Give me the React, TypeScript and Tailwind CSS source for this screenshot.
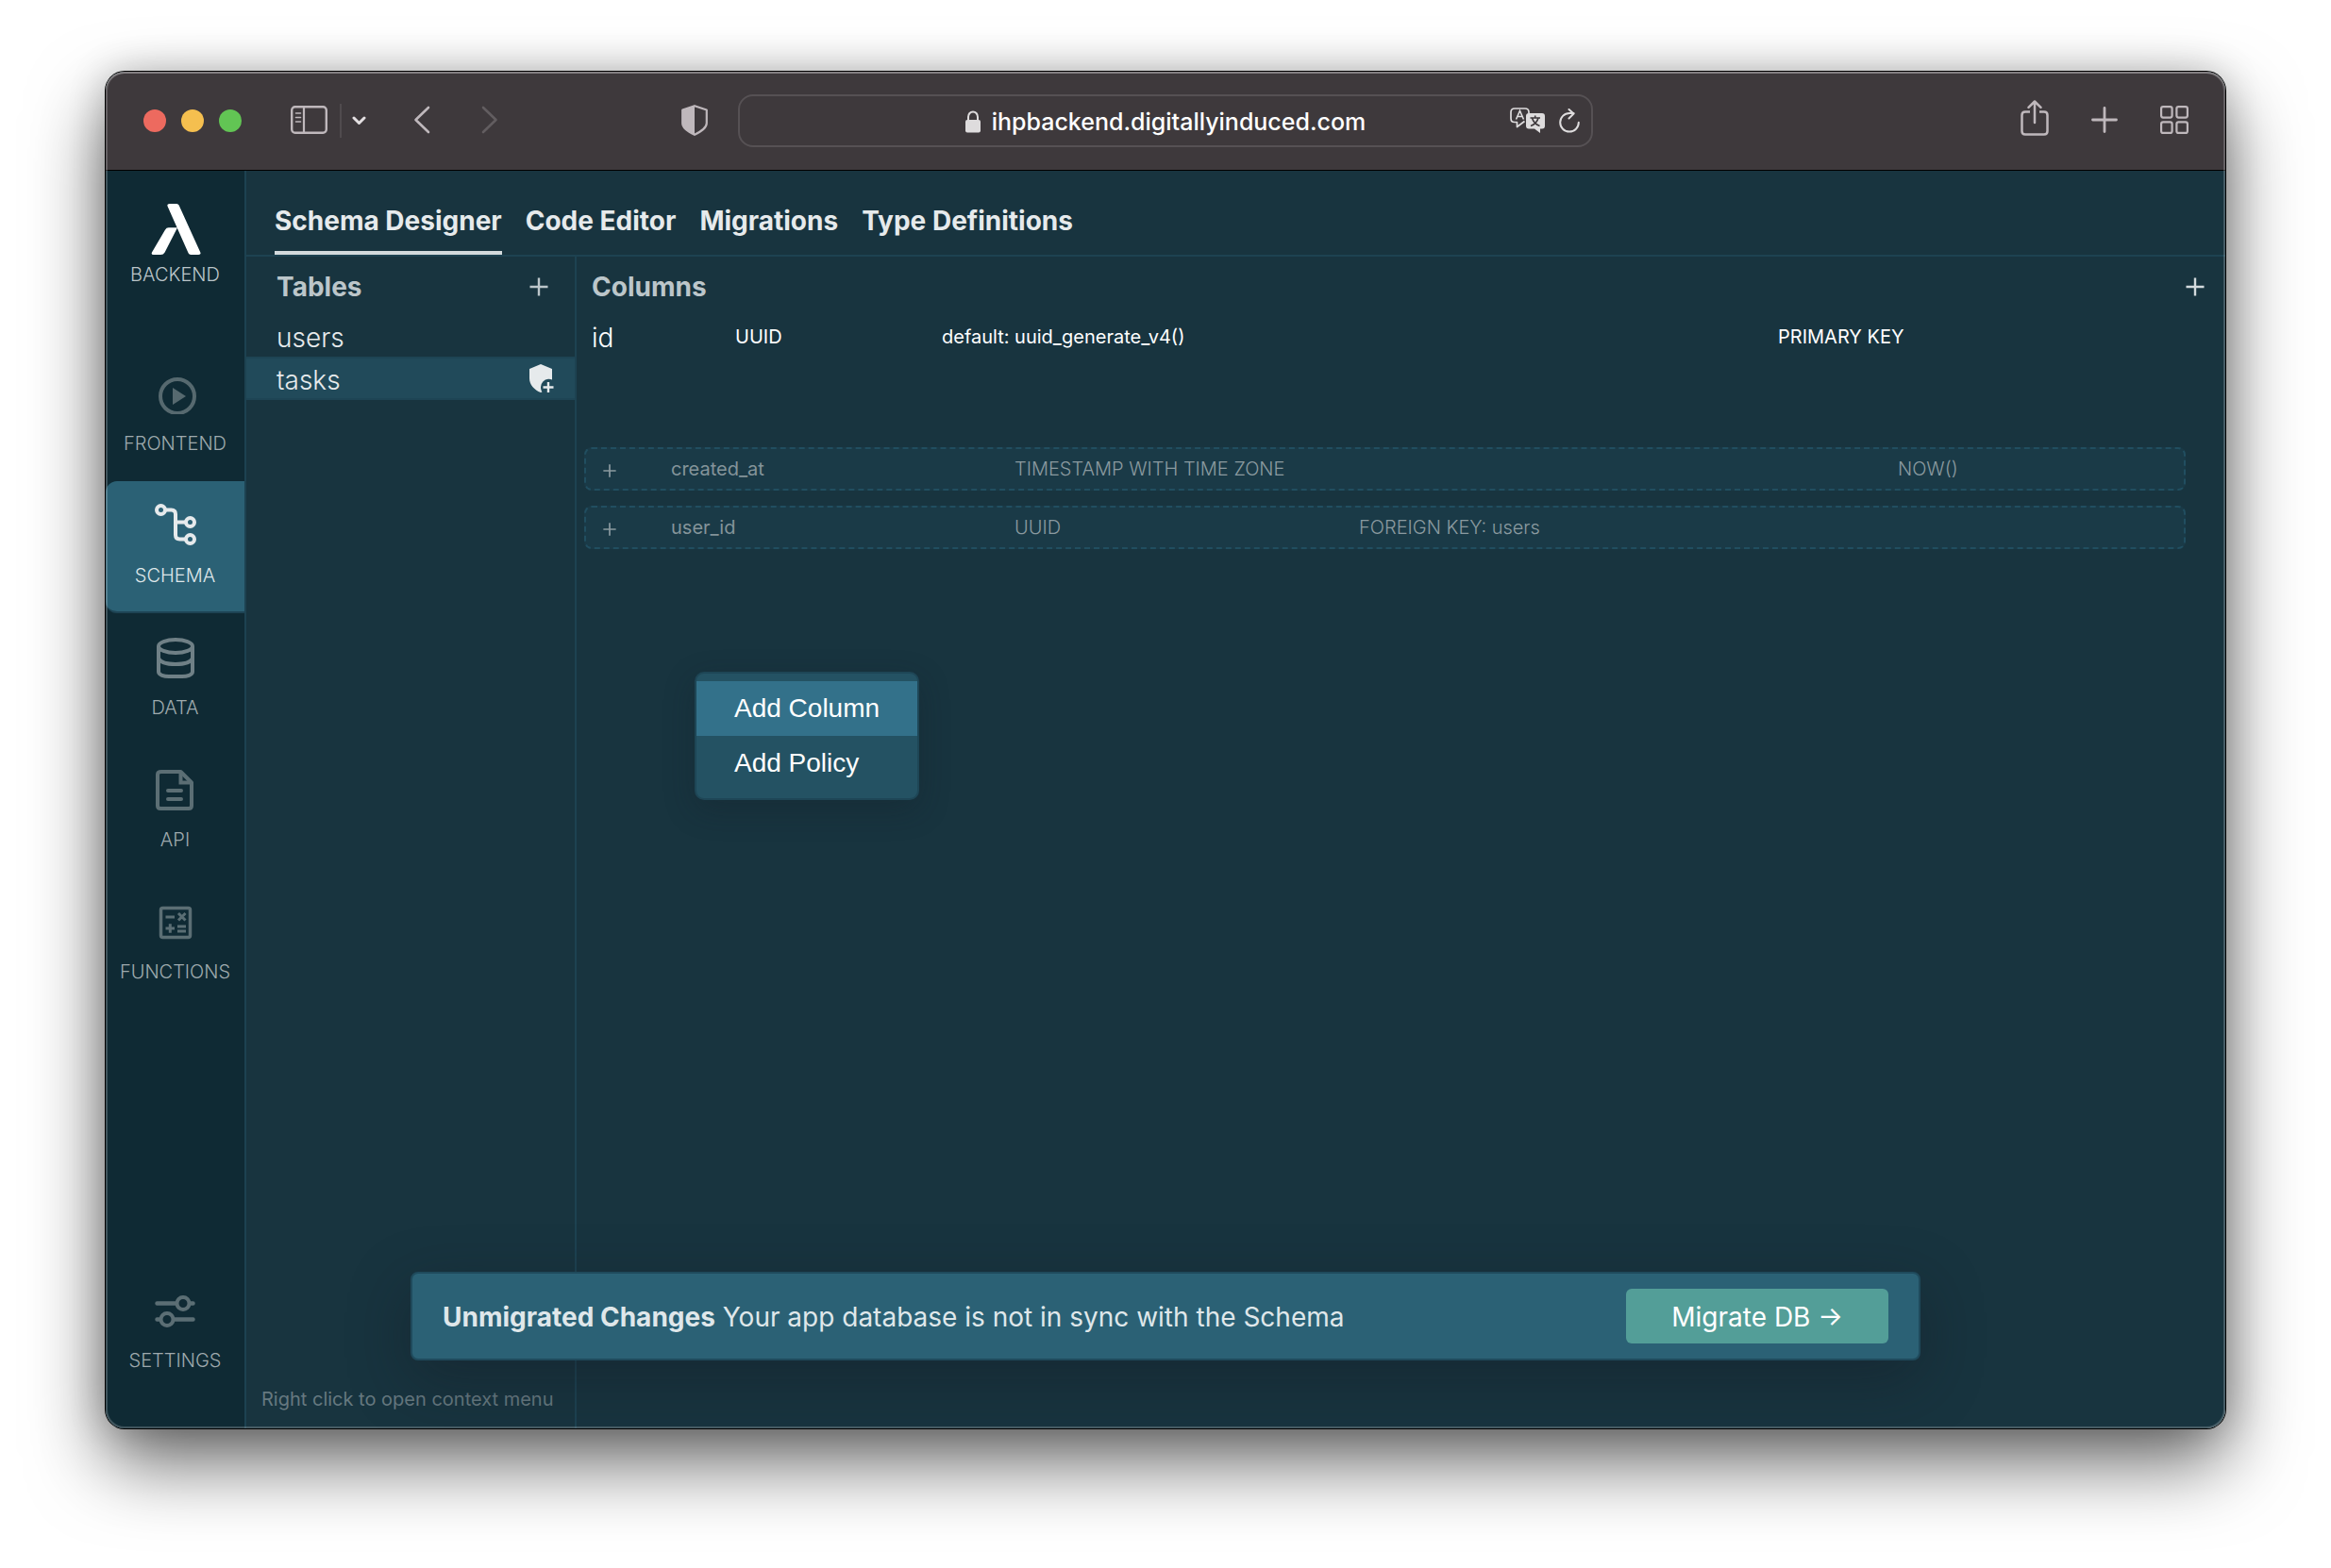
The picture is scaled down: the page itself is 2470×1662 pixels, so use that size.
import React from "react";

const tabs = ["Schema Designer", "Code Editor", "Migrations", "Type Definitions"];
const tables = ["users", "tasks"];

function LambdaLogo() {
  return (
    <svg className="h-[54px] w-[54px]" viewBox="0 0 54 54" fill="#ffffff" aria-hidden="true">
      <path d="M20.500 0h7.600q1.800 0 2.500 1.600l22.600 49.600q1.300 2.800-1.800 2.800h-8.200q-1.800 0-2.600-1.700L18.600 2.800Q17.600 0 20.500 0Z" />
      <path d="M19.700 25.300h9.300L15.600 51.500q-1.400 2.500-4.300 2.500H3.700Q.7 54 2.100 51.300L15.900 27.700q1.400-2.400 3.800-2.400Z" />
    </svg>
  );
}

function PlayIcon() {
  return (
    <svg className="h-11 w-11" viewBox="0 0 44 44" aria-hidden="true">
      <clipPath id="play-clip">
        <rect width="44" height="43" />
      </clipPath>
      <g clipPath="url(#play-clip)">
        <circle cx="24" cy="24" r="18" fill="none" stroke="currentColor" strokeWidth="4" />
        <path d="M19 15v18l14-9Z" fill="currentColor" />
      </g>
    </svg>
  );
}

function SchemaIcon() {
  return (
    <svg className="h-11 w-11 overflow-visible" viewBox="0 0 44 44" fill="none" stroke="currentColor" strokeWidth="4" aria-hidden="true">
      <circle cx="6.500" cy="4.500" r="4.500" />
      <circle cx="37.500" cy="17.500" r="4.500" />
      <circle cx="37.500" cy="35.500" r="4.500" />
      <path d="M12 4.500h5.500q4.500 0 4.500 4.500v22q0 4.500 4.500 4.500H32M22 17.500h10" />
    </svg>
  );
}

function DataIcon() {
  return (
    <svg className="h-11 w-11" viewBox="0 0 44 44" fill="none" stroke="currentColor" strokeWidth="4" aria-hidden="true">
      <ellipse cx="22" cy="9" rx="18" ry="7" />
      <path d="M4 9v27c0 3.500 6 5 11 5h14c5 0 11-1.500 11-5V9" />
      <path d="M4 22c2 4 9 6 18 6s16-2 18-6" />
    </svg>
  );
}

function ApiIcon() {
  return (
    <svg className="h-11 w-11" viewBox="0 0 44 44" fill="none" stroke="currentColor" strokeWidth="4" aria-hidden="true">
      <path d="M7 2h20.500L39 13.500V38q0 3-3 3H6q-3 0-3-3V5q0-3 4-3Z" strokeLinejoin="round" />
      <path d="M27.500 2v11.500H39" />
      <path d="M14 22h14M14 31h14" strokeLinecap="round" />
    </svg>
  );
}

function FunctionsIcon() {
  return (
    <svg className="h-11 w-11" viewBox="0 0 44 44" fill="none" stroke="currentColor" strokeWidth="3" aria-hidden="true">
      <rect x="6.500" y="6.500" width="31" height="31" rx="2" strokeWidth="3.500" />
      <path d="M11.500 16h9.500M25 12l7.500 7.500M32.500 12L25 19.500M11.500 28H21M16.300 23.300v9.500M24 26h9M24 31h9" />
    </svg>
  );
}

function SettingsIcon() {
  return (
    <svg className="h-11 w-11" viewBox="0 0 44 44" fill="none" stroke="currentColor" strokeWidth="4.500" strokeLinecap="round" aria-hidden="true">
      <circle cx="30" cy="13.500" r="6.500" strokeWidth="4" />
      <circle cx="13" cy="30.500" r="6.500" strokeWidth="4" />
      <path d="M2.500 13.500H22M38 13.500h2.500M2.500 30.500H5M21 30.500h19.500" />
    </svg>
  );
}

function PlusIcon({ className }: { className: string }) {
  return (
    <svg className={className} viewBox="0 0 20 20" fill="none" stroke="currentColor" strokeWidth="2.400" aria-hidden="true">
      <path d="M10 0.500v19M0.500 10h19" />
    </svg>
  );
}

function ShieldPlusIcon() {
  return (
    <svg className="h-[30px] w-[26px]" viewBox="0 0 26 30" aria-hidden="true">
      <path
        fill="currentColor"
        d="M12 0 24 5v11.400a9 9 0 0 0-4-.6 8.600 8.600 0 0 0-8 8.500c0 2 .5 3.700 1.400 5.200l-1.400.5C5 27.500 0 21.500 0 15V5Z"
      />
      <path d="M20 19v11M14.500 24.500h11" fill="none" stroke="currentColor" strokeWidth="2.400" />
    </svg>
  );
}

const sections = [
  { label: "FRONTEND", icon: <PlayIcon />, tone: "text-[#56696f]" },
  { label: "SCHEMA", icon: <SchemaIcon />, tone: "text-[#e6eaec]", active: true },
  { label: "DATA", icon: <DataIcon />, tone: "text-[#6f8086]" },
  { label: "API", icon: <ApiIcon />, tone: "text-[#5b6e74]" },
  { label: "FUNCTIONS", icon: <FunctionsIcon />, tone: "text-[#5b6e74]" },
];

function NavItem({ label, icon, tone, active }: { label: string; icon: React.ReactNode; tone: string; active?: boolean }) {
  return (
    <a
      href="#"
      aria-current={active ? "page" : undefined}
      className={
        active
          ? "flex h-[140px] flex-col items-center gap-4 rounded-l-xl border-b-2 border-[#1e4454] bg-[#2b6175] pt-[26px] text-[#dfe7ea]"
          : "flex h-[140px] flex-col items-center gap-4 pt-[26px] text-[#9faaae]"
      }
    >
      <span className={tone}>{icon}</span>
      <span className="text-xl leading-7 font-light">{label}</span>
    </a>
  );
}

function TitleBar() {
  return (
    <header className="grid h-[105px] grid-cols-[1fr_906px_1fr] items-center border-b border-black bg-[#3e393c] text-[#bfb8bc]">
      <div className="flex items-center pl-10">
        <div className="flex gap-4">
          <button aria-label="Close" className="size-6 rounded-full bg-[#ed6a5f]" />
          <button aria-label="Minimize" className="size-6 rounded-full bg-[#f5bf4f]" />
          <button aria-label="Zoom" className="size-6 rounded-full bg-[#62c554]" />
        </div>
        <button aria-label="Sidebar" className="mb-0.5 ml-[52px]">
          <svg className="h-[30px] w-[39px]" viewBox="0 0 39 30" fill="none" stroke="currentColor" aria-hidden="true">
            <rect x="1.200" y="1.200" width="36.600" height="27.600" rx="3.500" strokeWidth="2.400" />
            <path d="M14 1v28" strokeWidth="2.200" />
            <path d="M5.500 8h5M5.500 12.500h5M5.500 17h5" strokeWidth="1.600" strokeLinecap="round" />
          </svg>
        </button>
        <span className="ml-[13px] h-9 w-0.5 bg-[#504b4e]" />
        <button aria-label="Tab groups" className="ml-[11px] text-[#e4e0e2]">
          <svg className="h-2.5 w-[15px]" viewBox="0 0 15 10" fill="none" stroke="currentColor" strokeWidth="3" strokeLinecap="round" strokeLinejoin="round" aria-hidden="true">
            <path d="m2 2 5.500 5.500L13 2" />
          </svg>
        </button>
        <button aria-label="Back" className="mb-0.5 ml-[50px]">
          <svg className="h-[30px] w-[18px]" viewBox="0 0 18 30" fill="none" stroke="currentColor" strokeWidth="2.600" strokeLinecap="round" strokeLinejoin="round" aria-hidden="true">
            <path d="M16 2 2.500 15 16 28" />
          </svg>
        </button>
        <button aria-label="Forward" className="mb-0.5 ml-[54px] text-[#625d60]">
          <svg className="h-[30px] w-[18px]" viewBox="0 0 18 30" fill="none" stroke="currentColor" strokeWidth="2.600" strokeLinecap="round" strokeLinejoin="round" aria-hidden="true">
            <path d="m2 2 13.500 13L2 28" />
          </svg>
        </button>
        <button aria-label="Privacy report" className="mr-8 mb-0.5 ml-auto">
          <svg className="h-[33px] w-7" viewBox="0 0 28 33" aria-hidden="true">
            <path d="M14 1.200 26.800 5.500v14c0 5-5.500 8.500-12.800 12.300C6.700 28 1.200 24.500 1.200 19.500v-14Z" fill="none" stroke="currentColor" strokeWidth="2.200" strokeLinejoin="round" />
            <path d="M14 1.200v30.600C6.700 28 1.200 24.500 1.200 19.500v-14Z" fill="currentColor" />
          </svg>
        </button>
      </div>

      <div className="grid h-14 grid-cols-[1fr_auto_1fr] items-center rounded-2xl border-2 border-[#565154] px-3 text-[#dedcdd]">
        <span />
        <label className="flex items-center gap-3 pt-0.5">
          <svg className="h-6 w-4" viewBox="0 0 16 24" aria-hidden="true">
            <rect y="10" width="16" height="13.500" rx="2" fill="currentColor" />
            <path d="M3 11V7a5 5.600 0 0 1 10 0v4" fill="none" stroke="currentColor" strokeWidth="2" />
          </svg>
          <input
            aria-label="Address"
            readOnly
            value="ihpbackend.digitallyinduced.com"
            className="field-sizing-content bg-transparent font-['Inter'] text-[25px] leading-8 font-medium text-white outline-none"
          />
        </label>
        <div className="flex items-center justify-end gap-3.5">
          <button aria-label="Translate">
            <svg className="h-7 w-[38px]" viewBox="0 0 38 28" fill="none" aria-hidden="true">
              <path d="M15.500 14.500 7.500 20.500v-5H5q-4 0-4-4V5q0-4 4-4h11q4 0 4 4v1.500" stroke="currentColor" strokeWidth="1.700" strokeLinejoin="round" />
              <path d="M6.500 12.500 10.500 3.500l4 9M8 9.500h5" stroke="currentColor" strokeWidth="1.600" />
              <path d="M20 6h14q3 0 3 3v10.500q0 3-3 3h-2V27l-6-4.500h-6q-3 0-3-3V9q0-3 3-3Z" fill="currentColor" />
              <path d="M21.500 11h10.500M26.700 8.500V11M23.500 11c1 4 4 7 8 8.500M30 11c-1 4-4 7-8 8.500" stroke="#3e393c" strokeWidth="1.600" />
            </svg>
          </button>
          <button aria-label="Reload">
            <svg className="h-[26px] w-[22px]" viewBox="0 0 22 26" fill="none" stroke="currentColor" strokeWidth="2" strokeLinecap="round" strokeLinejoin="round" aria-hidden="true">
              <path d="M20.800 14.800A9.800 9.800 0 1 1 11 5h4.500" />
              <path d="M10.500 1 15.500 5.500 10.500 10.500" />
            </svg>
          </button>
        </div>
      </div>

      <div className="flex items-center justify-end gap-[45px] pr-[39px]">
        <button aria-label="Share" className="mb-1.5">
          <svg className="h-[38px] w-[30px]" viewBox="0 0 30 38" fill="none" stroke="currentColor" strokeWidth="2.500" strokeLinecap="round" strokeLinejoin="round" aria-hidden="true">
            <path d="M10 12.500H5q-3.500 0-3.500 3.500v17q0 3.500 3.500 3.500h20q3.500 0 3.500-3.500V16q0-3.500-3.500-3.500h-5" strokeLinecap="butt" />
            <path d="M15 24V2M8.500 7.800 15 1.500l6.500 6.300" />
          </svg>
        </button>
        <button aria-label="New tab" className="mb-0.5">
          <svg className="size-7" viewBox="0 0 28 28" fill="none" stroke="currentColor" strokeWidth="2.800" strokeLinecap="round" aria-hidden="true">
            <path d="M14 1.500v25M1.500 14h25" />
          </svg>
        </button>
        <button aria-label="Tab overview" className="mb-0.5">
          <svg className="size-[30px]" viewBox="0 0 30 30" fill="none" stroke="currentColor" strokeWidth="2.200" aria-hidden="true">
            <rect x="1.100" y="1.100" width="11.500" height="11.500" rx="2" />
            <rect x="17.400" y="1.100" width="11.500" height="11.500" rx="2" />
            <rect x="1.100" y="17.400" width="11.500" height="11.500" rx="2" />
            <rect x="17.400" y="17.400" width="11.500" height="11.500" rx="2" />
          </svg>
        </button>
      </div>
    </header>
  );
}

function TablesPanel() {
  return (
    <section aria-label="Tables" className="flex w-[350px] shrink-0 flex-col border-r-2 border-[#1d4251]">
      <div className="flex h-[62px] items-center justify-between pt-0.5 pr-7 pl-8 text-[#bcc6ca]">
        <h2 className="text-[28px] leading-9 font-bold">Tables</h2>
        <button aria-label="Add table">
          <PlusIcon className="size-5" />
        </button>
      </div>
      <ul className="text-[28px] leading-10 font-light text-[#e6eaec]">
        {tables.map((name) => (
          <li
            key={name}
            className={
              name === "tasks"
                ? "flex h-[46px] items-center justify-between border-y-2 border-[#1e4454] bg-[#214a5a] pr-[22px] pl-8"
                : "flex h-11 items-center pl-8"
            }
          >
            <a href="#" className="pt-[3px]">
              {name}
            </a>
            {name === "tasks" && (
              <button aria-label="Add policy to tasks">
                <ShieldPlusIcon />
              </button>
            )}
          </li>
        ))}
      </ul>
      <p className="mt-auto mb-[17px] pl-4 text-xl leading-7 text-[#667980]">Right click to open context menu</p>
    </section>
  );
}

const suggestions = [
  { name: "created_at", type: "TIMESTAMP WITH TIME ZONE", key: "", value: "NOW()" },
  { name: "user_id", type: "UUID", key: "FOREIGN KEY: users", value: "" },
];

function ColumnsPanel() {
  return (
    <section aria-label="Columns" className="relative min-w-0 flex-1">
      <div className="flex h-[62px] items-center justify-between pt-0.5 pr-[22px] pl-4 text-[#bcc6ca]">
        <h2 className="text-[28px] leading-9 font-bold">Columns</h2>
        <button aria-label="Add column" className="text-[#d3dadd]">
          <PlusIcon className="size-5" />
        </button>
      </div>
      <table className="w-full table-fixed text-left text-xl leading-7 text-white">
        <tbody>
          <tr className="h-11">
            <td className="w-[168px] pt-1 pl-4 text-[28px] leading-10 font-light">id</td>
            <td className="w-[219px] pt-0.5">UUID</td>
            <td className="pt-0.5">default: uuid_generate_v4()</td>
            <td className="w-[474px] pt-0.5">PRIMARY KEY</td>
          </tr>
        </tbody>
      </table>

      <div className="mt-24 mr-[42px] ml-2 flex flex-col gap-4">
        {suggestions.map((s) => (
          <button
            key={s.name}
            className="grid h-[46px] grid-cols-[72px_364px_365px_1fr_303px] items-center rounded-lg border-2 border-dashed border-[#214e60] bg-[#1a3a47] pl-[18px] text-left text-xl leading-7 font-light text-[#8b9aa0]"
          >
            <PlusIcon className="mt-1 size-3.5" />
            <span className="font-normal text-[#84949a]">{s.name}</span>
            <span>{s.type}</span>
            <span>{s.key}</span>
            <span>{s.value}</span>
          </button>
        ))}
      </div>

      <div
        role="menu"
        className="absolute top-[440px] left-[125px] w-[238px] rounded-[10px] border-2 border-[#1e4656] bg-[#245263] pt-2 pb-2 font-['Liberation_Sans',sans-serif] text-[28px] leading-[58px] text-white shadow-[0_10px_32px_rgba(20,30,40,0.3)]"
      >
        <button role="menuitem" className="block w-full bg-[#33718a] pl-10 text-left">
          Add Column
        </button>
        <button role="menuitem" className="block w-full pl-10 text-left">
          Add Policy
        </button>
      </div>
    </section>
  );
}

function MigrationBanner() {
  return (
    <div className="absolute inset-x-80 bottom-[72px] mx-auto flex h-[94px] max-w-[1600px] items-center justify-between rounded-lg border-2 border-[#1f4a5c] bg-[#2b6175] px-8 text-[28px] leading-9 shadow-[0_20px_64px_rgba(20,25,35,0.4)]">
      <p className="pt-0.5 text-[#dfe7ea]">
        <strong className="font-bold">Unmigrated Changes</strong> Your app database is not in sync with the Schema
      </p>
      <button className="h-[58px] rounded-md bg-[#539e98] px-12 pt-0.5 text-white">Migrate DB →</button>
    </div>
  );
}

export default function App() {
  return (
    <div className="flex min-h-screen flex-col bg-white px-28 pt-[76px] pb-[148px] font-['Inter',sans-serif]">
      <div className="relative flex flex-1 flex-col rounded-[20px] shadow-[0_0_0_1px_#000,0_0_40px_rgba(0,0,0,0.2),0_36px_80px_rgba(0,0,0,0.6)]">
        <div className="flex flex-1 flex-col overflow-hidden rounded-[20px] bg-[#18343f]">
          <TitleBar />
          <div className="relative flex flex-1">
            <nav aria-label="Sections" className="flex w-[149px] shrink-0 flex-col border-r-2 border-[#1d4251] bg-[#0f2a34]">
              <a href="#" className="flex h-[189px] flex-col items-center gap-[7px] pt-[35px] text-[#bcc6ca]">
                <LambdaLogo />
                <span className="text-xl leading-7 font-light">BACKEND</span>
              </a>
              {sections.map((s) => (
                <NavItem key={s.label} {...s} />
              ))}
              <div className="mt-auto mb-8">
                <NavItem label="SETTINGS" icon={<SettingsIcon />} tone="text-[#5b6e74]" />
              </div>
            </nav>
            <div className="flex min-w-0 flex-1 flex-col">
              <nav aria-label="Schema tools" className="flex h-[91px] items-end gap-[25px] border-b-2 border-[#1d4251] pl-[30px] text-[28px] leading-9 font-bold text-[#e6eaec]">
                {tabs.map((tab, i) => (
                  <a
                    key={tab}
                    href="#"
                    className={i === 0 ? "border-b-4 border-[#d3dadd] pb-3.5" : "border-b-4 border-transparent pb-3.5"}
                  >
                    {tab}
                  </a>
                ))}
              </nav>
              <div className="flex flex-1">
                <TablesPanel />
                <ColumnsPanel />
              </div>
            </div>
            <MigrationBanner />
          </div>
        </div>
        <div className="pointer-events-none absolute inset-0 rounded-[20px] shadow-[inset_0_0_0_2px_rgba(255,255,255,0.2),inset_0_2px_0_rgba(255,255,255,0.2)]" />
      </div>
    </div>
  );
}
